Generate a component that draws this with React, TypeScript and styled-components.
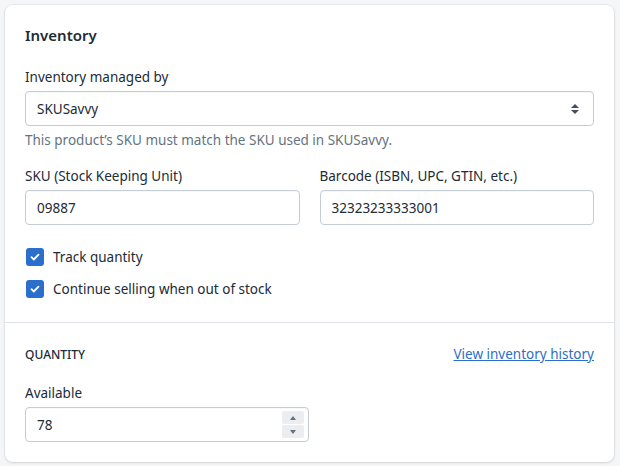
import React from "react";
import styled, { createGlobalStyle } from "styled-components";

const G = createGlobalStyle`
  body { margin:0; background:#f4f6f8; font-family:"Noto Sans", sans-serif; color:#212b36; }
`;
const Card = styled.div`
  margin:5px 6px 5px 5px; background:#fff; border-radius:8px;
  box-shadow:0 0 0 1px rgba(63,63,68,0.05),0 1px 3px rgba(63,63,68,0.15);
`;
const Section = styled.div<{ $top?: boolean }>`
  padding:${p => p.$top ? "20px 20px 20px 20px" : "18px 20px 23px 20px"};
  border-top:${p => p.$top ? "1px solid #dfe3e8" : "none"};
`;
const Title = styled.h2`margin:0 0 20px; font-size:15px; font-weight:600; line-height:24px;`;
const Label = styled.div`font-size:13.5px; line-height:20px; margin-bottom:4px;`;
const Field = styled.div`display:flex; align-items:center; height:35px; border:1px solid #c4cdd5; border-radius:4px; padding:0 0 0 11px; font-size:13.5px; box-shadow:inset 0 1px 0 0 rgba(99,115,129,0.05); box-sizing:border-box; position:relative;`;
const Help = styled.div`font-size:13.5px; color:#637381; line-height:20px; margin-top:4px;`;
const Row = styled.div`display:grid; grid-template-columns:1fr 1fr; gap:20px; margin-top:16px;`;
const Checks = styled.div`display:flex; flex-direction:column; gap:12px; margin-top:22px;`;
const Check = styled.label`display:flex; align-items:center; gap:9px; font-size:13.5px; line-height:20px;`;
const Box = styled.span`width:18px; height:18px; border-radius:3px; background:#2c6ecb; display:flex; align-items:center; justify-content:center; margin-left:1px;`;
const Head = styled.div`display:flex; justify-content:space-between; align-items:center; margin-top:2px; margin-bottom:20px;`;
const Caps = styled.div`font-size:12px; font-weight:500; text-transform:uppercase;`;
const Link = styled.a`font-size:13.5px; color:#2c6ecb; text-decoration:underline;`;
const Half = styled.div`width:284px;`;
const Spin = styled.div`position:absolute; right:4px; top:3px; display:flex; flex-direction:column; gap:1px;`;
const SpinBtn = styled.div`width:22px; height:13px; background:#ebedf0; border-radius:2px; display:flex; align-items:center; justify-content:center;`;

const Tick = () => (
  <svg width="12" height="12" viewBox="0 0 12 12"><path d="M2.5 6.2l2.3 2.3 4.7-4.8" fill="none" stroke="#fff" strokeWidth="1.8" strokeLinecap="round" strokeLinejoin="round"/></svg>
);

export default function App() {
  return (
    <>
      <G />
      <Card>
        <Section>
          <Title>Inventory</Title>
          <Label>Inventory managed by</Label>
          <Field>
            SKUSavvy
            <svg style={{ position: "absolute", right: 13, top: 11 }} width="10" height="12" viewBox="0 0 10 12"><path d="M5 1l4 4H1zM5 11L1 7h8z" fill="#454f5b"/></svg>
          </Field>
          <Help>This product’s SKU must match the SKU used in SKUSavvy.</Help>
          <Row>
            <div><Label>SKU (Stock Keeping Unit)</Label><Field>09887</Field></div>
            <div><Label>Barcode (ISBN, UPC, GTIN, etc.)</Label><Field>32323233333001</Field></div>
          </Row>
          <Checks>
            <Check><Box><Tick /></Box>Track quantity</Check>
            <Check><Box><Tick /></Box>Continue selling when out of stock</Check>
          </Checks>
        </Section>
        <Section $top>
          <Head><Caps>Quantity</Caps><Link>View inventory history</Link></Head>
          <Label>Available</Label>
          <Half>
            <Field>
              78
              <Spin>
                <SpinBtn><svg width="6" height="4" viewBox="0 0 6 4"><path d="M3 0l3 4H0z" fill="#637381"/></svg></SpinBtn>
                <SpinBtn><svg width="6" height="4" viewBox="0 0 6 4"><path d="M3 4l3-4H0z" fill="#637381"/></svg></SpinBtn>
              </Spin>
            </Field>
          </Half>
        </Section>
      </Card>
    </>
  );
}
